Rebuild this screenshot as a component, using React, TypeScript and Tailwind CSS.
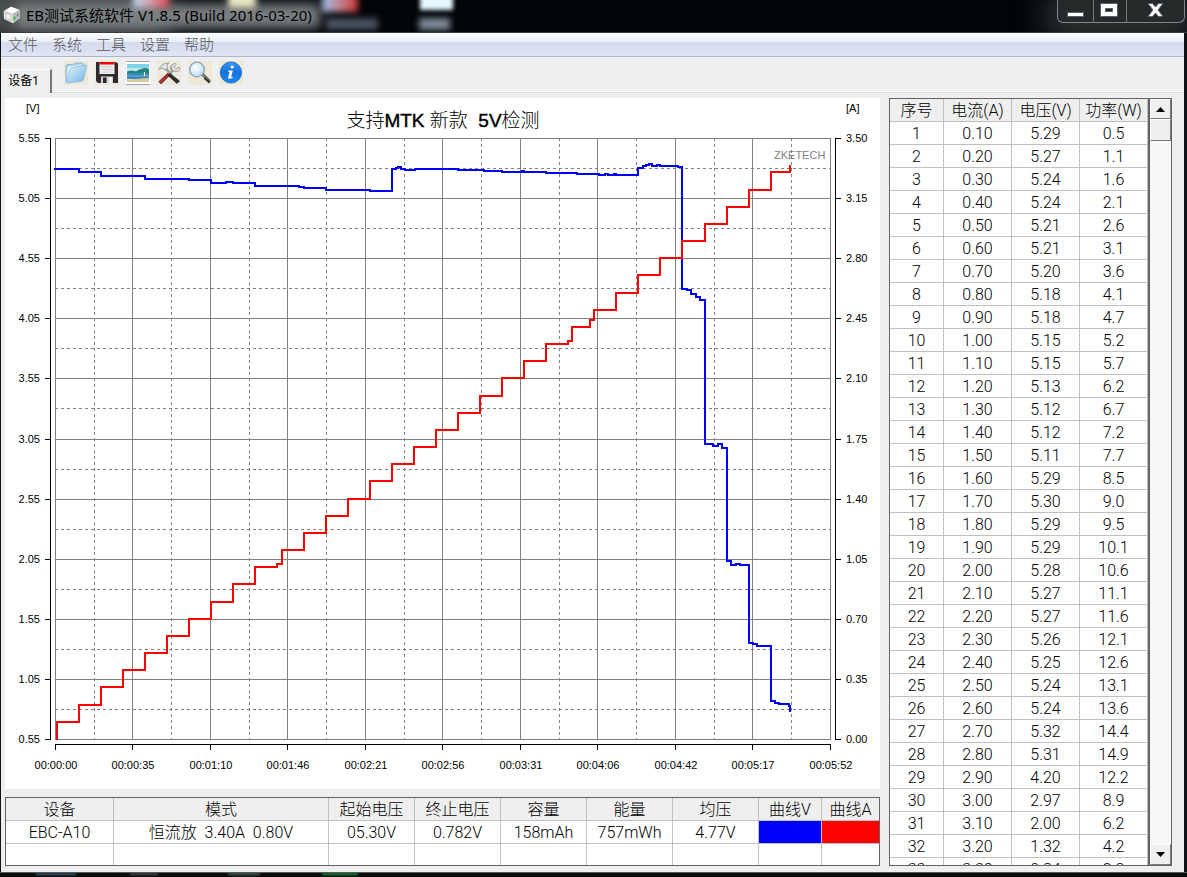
import React from "react";

const menus = ["文件", "系统", "工具", "设置", "帮助"];

const readings: [string, string, string][] = [
  ["0.10", "5.29", "0.5"], ["0.20", "5.27", "1.1"], ["0.30", "5.24", "1.6"], ["0.40", "5.24", "2.1"],
  ["0.50", "5.21", "2.6"], ["0.60", "5.21", "3.1"], ["0.70", "5.20", "3.6"], ["0.80", "5.18", "4.1"],
  ["0.90", "5.18", "4.7"], ["1.00", "5.15", "5.2"], ["1.10", "5.15", "5.7"], ["1.20", "5.13", "6.2"],
  ["1.30", "5.12", "6.7"], ["1.40", "5.12", "7.2"], ["1.50", "5.11", "7.7"], ["1.60", "5.29", "8.5"],
  ["1.70", "5.30", "9.0"], ["1.80", "5.29", "9.5"], ["1.90", "5.29", "10.1"], ["2.00", "5.28", "10.6"],
  ["2.10", "5.27", "11.1"], ["2.20", "5.27", "11.6"], ["2.30", "5.26", "12.1"], ["2.40", "5.25", "12.6"],
  ["2.50", "5.24", "13.1"], ["2.60", "5.24", "13.6"], ["2.70", "5.32", "14.4"], ["2.80", "5.31", "14.9"],
  ["2.90", "4.20", "12.2"], ["3.00", "2.97", "8.9"], ["3.10", "2.00", "6.2"], ["3.20", "1.32", "4.2"],
  ["3.30", "0.84", "2.8"],
];

const summaryColumns = [
  { title: "设备", width: "w-[108px]" },
  { title: "模式", width: "w-[215px]" },
  { title: "起始电压", width: "w-[86px]" },
  { title: "终止电压", width: "w-[86px]" },
  { title: "容量", width: "w-[86px]" },
  { title: "能量", width: "w-[86px]" },
  { title: "均压", width: "w-[86px]" },
  { title: "曲线V", width: "w-[63px]" },
  { title: "曲线A", width: "w-[57px]" },
];

/* Chart geometry */
const solidX = [55, 132, 210, 287, 365, 442, 520, 597, 675, 752, 830];
const dashedX = [94, 171, 249, 326, 404, 481, 559, 636, 714, 791];
const solidY = [138, 198, 258, 318, 378, 439, 499, 559, 619, 679, 739];
const dashedY = [168, 228, 288, 348, 408, 469, 529, 589, 649, 709];
const voltLabels = ["5.55", "5.05", "4.55", "4.05", "3.55", "3.05", "2.55", "2.05", "1.55", "1.05", "0.55"];
const ampLabels = ["3.50", "3.15", "2.80", "2.45", "2.10", "1.75", "1.40", "1.05", "0.70", "0.35", "0.00"];
const timeLabels = [
  "00:00:00", "00:00:35", "00:01:10", "00:01:46", "00:02:21", "00:02:56",
  "00:03:31", "00:04:06", "00:04:42", "00:05:17", "00:05:52",
];

const ampSteps: [number, number][] = [
  [57, 740], [57, 722], [79, 705], [101, 687], [123, 670], [145, 653], [167, 636], [189, 619], [211, 602],
  [233, 584], [255, 567], [277, 564], [282, 550], [304, 533], [326, 516], [348, 499], [370, 481], [392, 464],
  [414, 447], [436, 430], [458, 413], [480, 396], [502, 378], [524, 361], [546, 344], [568, 341], [572, 327],
  [590, 320], [594, 310], [616, 293], [638, 275], [660, 258], [682, 241], [705, 224], [727, 207], [749, 190],
  [771, 172], [790, 165],
];

const voltSteps: [number, number][] = [
  [54, 169], [79, 172], [101, 176], [145, 179], [189, 180], [211, 183], [226, 182], [233, 183], [255, 186],
  [299, 187], [304, 188], [326, 190], [370, 191], [392, 169], [396, 168], [398, 167], [401, 169], [405, 170],
  [415, 169], [458, 170], [484, 171], [502, 172], [522, 171], [524, 172], [546, 173], [577, 174], [599, 175],
  [605, 174], [608, 175], [614, 174], [616, 175], [638, 168], [643, 166], [646, 165], [649, 164], [652, 166],
  [657, 165], [660, 166], [678, 167], [682, 289], [687, 290], [691, 294], [696, 297], [700, 300], [705, 444],
  [713, 446], [718, 444], [722, 448], [727, 561], [731, 565], [736, 564], [740, 565], [749, 643], [753, 644],
  [757, 646], [771, 701], [775, 703], [779, 704], [789, 706], [790, 712],
];

function stepPath(points: [number, number][]) {
  return points.map(([x, y], i) => (i === 0 ? `M${x} ${y}` : `H${x}V${y}`)).join("");
}

function Chart() {
  return (
    <svg
      className="h-full w-full font-['Liberation_Sans','Noto_Sans_CJK_SC',sans-serif]"
      viewBox="5 98 875 691"
      role="img"
      aria-label="电压电流曲线"
    >
      <g stroke="#808080" fill="none" shapeRendering="crispEdges">
        {solidX.map((x) => <path key={x} d={`M${x + 0.5} 138V740`} />)}
        {solidY.map((y) => <path key={y} d={`M55 ${y + 0.5}H831`} />)}
        <g strokeDasharray="3 3">
          {dashedX.map((x) => <path key={x} d={`M${x + 0.5} 138V740`} />)}
          {dashedY.map((y) => <path key={y} d={`M55 ${y + 0.5}H831`} />)}
        </g>
      </g>
      <g stroke="#000" fill="none" shapeRendering="crispEdges">
        <path d="M50.5 138V740M835.5 138V740M55 744.5H831" />
        {solidY.map((y) => <path key={y} d={`M45 ${y + 0.5}H51M835 ${y + 0.5}H841`} />)}
        {solidX.map((x) => <path key={x} d={`M${x + 0.5} 744V750`} />)}
      </g>
      <g fontSize="11" fill="#000">
        <text x="26" y="112">[V]</text>
        <text x="846" y="112">[A]</text>
        {voltLabels.map((t, i) => <text key={t} x="40" y={solidY[i] + 4} textAnchor="end">{t}</text>)}
        {ampLabels.map((t, i) => <text key={t} x="846" y={solidY[i] + 4}>{t}</text>)}
        {timeLabels.map((t, i) => <text key={t} x={solidX[i] + 1} y="769" textAnchor="middle">{t}</text>)}
        <text x="774" y="159" fill="#808080">ZKETECH</text>
      </g>
      <text x="443" y="127" fontSize="19" textAnchor="middle" xmlSpace="preserve" fontWeight="300">
        支持<tspan stroke="#000" strokeWidth="0.4">MTK</tspan> 新款{"\u00a0 "}
        <tspan stroke="#000" strokeWidth="0.4">5V</tspan>检测
      </text>
      <path d={stepPath(voltSteps)} fill="none" stroke="#00f" strokeWidth="2" shapeRendering="crispEdges" />
      <path d={stepPath(ampSteps)} fill="none" stroke="#f00" strokeWidth="2" shapeRendering="crispEdges" />
    </svg>
  );
}

function AppIcon() {
  return (
    <svg className="size-5 shrink-0" viewBox="0 0 20 20" aria-hidden="true">
      <path d="M1 6 9 1l9 4v9l-8 5-8-5z" fill="#333" />
      <path d="M1.500 6 9 1.500 18 5l-7 4z" fill="#fff" />
      <path d="M1.500 6 11 9v9.500L2 14z" fill="#e2e4e2" />
      <path d="M11 9l7-4v8.500l-7 5z" fill="#b9bdbb" />
      <path d="M4 8.500 9 10v5.500L4 13.500z" fill="#f9faf9" stroke="#999" strokeWidth=".6" />
      <path d="M11.500 12l2-1v3l-2 1.500z" fill="#39b54a" />
      <path d="M15 9l1.500-1v3L15 12z" fill="#777" />
    </svg>
  );
}

function FolderIcon() {
  return (
    <svg className="size-6" viewBox="0 0 24 24" aria-hidden="true">
      <defs>
        <linearGradient id="folder" x1="0" y1="0" x2="1" y2="1">
          <stop offset="0" stopColor="#e9f7ff" />
          <stop offset="1" stopColor="#6eb4e6" />
        </linearGradient>
      </defs>
      <path d="M2 5q0-1.500 1.500-1.500H9L10.500 2H18q1.200 0 1.200 1.200V6L16 20 2 21z" fill="#a9d3ee" stroke="#82aecb" strokeWidth=".7" />
      <path d="M4 6 18 3.500 16 18 3 19z" fill="#fff" />
      <path d="M7.500 6.500 22 4q.8 0 .6 1L19.500 18.500q-.3 1.200-1.500 1.500L3.500 22q-1.200 0-1-1.200L6 8q.4-1.300 1.500-1.500z" fill="url(#folder)" stroke="#7eafd4" strokeWidth=".7" />
    </svg>
  );
}

function FloppyIcon() {
  return (
    <svg className="size-6" viewBox="0 0 24 24" aria-hidden="true">
      <path d="M1 1h20l2 1.500V22H3l-2-2z" fill="#2e2a2e" />
      <path d="M4.500 1h15v12h-15z" fill="#f1f1f1" />
      <path d="M4.500 1h15v2.500h-15z" fill="#f00" />
      <path d="M6 6h12M6 8.500h12M6 11h12" stroke="#c9c9c9" />
      <path d="M6 15.500h12V22H6z" fill="#d6d6d6" />
      <path d="M8 16.500h3.500V22H8z" fill="#252525" />
      <path d="M14 16h3v6h-3z" fill="#f6f6f6" />
    </svg>
  );
}

function PictureIcon() {
  return (
    <svg className="size-6" viewBox="0 0 24 24" aria-hidden="true">
      <path d="M0 0h24v24H0z" fill="#fff" />
      <path d="M0 .5h24M0 23.500h24" stroke="#a3a3a3" />
      <path d="M1 3h22v9H1z" fill="#7fd0e9" />
      <path d="M1 7h22v5H1z" fill="#bfe9ee" />
      <path d="M1 10.500q4-1.500 7-.5 3 .6 5-1.500 2-.7 3.500-1 3-1.300 6.500.5v5H1z" fill="#228477" />
      <path d="M1 12h22v6H1z" fill="#3987bd" />
      <path d="M1 15h22" stroke="#6db2d6" />
      <path d="M1 18.500 23 17v4H1z" fill="#dcca9d" />
      <path d="M18.500 11v4" stroke="#fff8ac" strokeWidth="1.200" />
    </svg>
  );
}

function ToolsIcon() {
  return (
    <svg className="size-6" viewBox="0 0 24 24" aria-hidden="true">
      <path d="M16 3.500q-4 5 .5 5.500L7 18" fill="none" stroke="#999" strokeWidth="2" />
      <path d="M15 9q-2-5 3-7l1 1.500-2 2.500 2 2 3-2 1 1q-1 5-6 3z" fill="#e4e4e4" stroke="#8a8a8a" strokeWidth=".7" />
      <path d="M2 20.500 11 12l2 2-8.500 8.500q-1.600.3-2.500-2z" fill="#a63336" stroke="#6e2023" strokeWidth=".8" />
      <path d="M8 7l7 7" stroke="#a2a2a2" strokeWidth="2.500" />
      <path d="M2 8Q5 2 12 2q-2 1-2 2.500l1 2-3 2.500-2-2q-2 0-3.500 1.500z" fill="#e8e8e8" stroke="#888" strokeWidth=".8" />
      <path d="M13 12.500 22.500 20l-2.500 2.500-9-8z" fill="#2d2d2d" stroke="#111" strokeWidth=".6" />
    </svg>
  );
}

function MagnifierIcon() {
  return (
    <svg className="size-6" viewBox="0 0 24 24" aria-hidden="true">
      <defs>
        <radialGradient id="lens" cx=".4" cy=".35" r=".75">
          <stop offset="0" stopColor="#fdfeff" />
          <stop offset="1" stopColor="#b4dcf5" />
        </radialGradient>
      </defs>
      <path d="M14 14.500l2-1.500 6 6q.8 1.800-1.200 2.700z" fill="#7b7b7b" stroke="#4a4a4a" strokeWidth=".7" />
      <path d="M17 17.500l4 3.500" stroke="#333" strokeWidth="2" strokeLinecap="round" />
      <circle cx="9" cy="8.500" r="7.300" fill="url(#lens)" stroke="#8d9db0" strokeWidth="1.300" />
    </svg>
  );
}

function InfoIcon() {
  return (
    <svg className="size-6" viewBox="0 0 24 24" aria-hidden="true">
      <defs>
        <linearGradient id="info" x1="0" y1="0" x2="0" y2="1">
          <stop offset="0" stopColor="#3d97f2" />
          <stop offset=".5" stopColor="#1672df" />
          <stop offset="1" stopColor="#1b8bf0" />
        </linearGradient>
      </defs>
      <circle cx="12" cy="11.500" r="10.600" fill="url(#info)" stroke="#1b5fb8" strokeWidth=".8" />
      <circle cx="13.200" cy="6" r="1.600" fill="#fff" />
      <path d="M9.500 9.500h4.300l-1.700 6.500 1.700-.3-.3 1.300q-2 1-3.600.8-1-.3-.7-1.500l1.300-5.300H9.200z" fill="#fff" />
    </svg>
  );
}

const tools = [
  { label: "打开", Icon: FolderIcon },
  { label: "保存", Icon: FloppyIcon },
  { label: "图片", Icon: PictureIcon },
  { label: "工具", Icon: ToolsIcon },
  { label: "查看", Icon: MagnifierIcon },
  { label: "关于", Icon: InfoIcon },
];

function TitleBar() {
  return (
    <header className="relative flex h-[33px] shrink-0 items-start justify-between overflow-hidden border-b border-[#3c3d3e] bg-[#020508]">
      <div className="absolute inset-0" aria-hidden="true">
        <div className="absolute -top-4 -left-6 h-14 w-48 bg-[#4a5152] blur-md" />
        <div className="absolute top-1 left-4 h-6 w-[304px] bg-[#7c8183] blur-[6px]" />
        <div className="absolute -top-2 left-[133px] h-4 w-9 bg-linear-to-r from-[#b7dcf2] to-[#d84a56] blur-[3px]" />
        <div className="absolute -top-2 left-[228px] h-4 w-7 bg-[#e9e6c4] blur-[3px]" />
        <div className="absolute -top-2 left-[322px] h-5 w-9 bg-linear-to-r from-[#9cbfea] to-[#cc2830] blur-[3px]" />
        <div className="absolute top-[18px] left-[326px] h-3 w-[52px] bg-[#46525d] blur-[3px]" />
        <div className="absolute -top-2 left-[420px] h-[18px] w-[33px] bg-[#e6f5ff] blur-[2px]" />
        <div className="absolute top-[18px] left-[419px] h-3 w-[31px] bg-[#7c8995] blur-[3px]" />
        <div className="absolute -top-2 -right-2 h-12 w-[150px] bg-[#303233] blur-lg" />
      </div>
      <div className="relative flex items-center gap-1 pt-[5px] pl-[2px]">
        <AppIcon />
        <h1 className="font-['Noto_Sans','Noto_Sans_CJK_SC',sans-serif] text-[15px] leading-5 whitespace-nowrap text-black">
          EB测试系统软件 V1.8.5 (Build 2016-03-20)
        </h1>
      </div>
      <div className="relative mr-[2px] flex h-[23px] rounded-b-md border border-t-0 border-[#808486] bg-[#26292a]">
        <button aria-label="最小化" className="flex w-9 items-center justify-center border-r border-[#77797b]">
          <svg className="h-4 w-5" viewBox="0 0 20 16" aria-hidden="true">
            <path d="M1.500 9.500h16v4h-16z" fill="#fff" stroke="#595d70" />
          </svg>
        </button>
        <button aria-label="最大化" className="flex w-[33px] items-center justify-center border-r border-[#77797b]">
          <svg className="h-4 w-5" viewBox="0 0 20 16" aria-hidden="true">
            <path d="M.5.5h17v13H.5zM5.500 5.500v3h7v-3z" fill="#fff" fillRule="evenodd" stroke="#595d70" />
          </svg>
        </button>
        <button aria-label="关闭" className="flex w-[57px] items-center justify-center">
          <svg className="h-4 w-5" viewBox="0 0 20 16" aria-hidden="true">
            <path d="M2 .5h4.500L9.500 4l3-3.500H17L12 7l5 6.500h-4.500l-3-3.500-3 3.500H2L7 7z" fill="#fff" stroke="#595d70" />
          </svg>
        </button>
      </div>
    </header>
  );
}

function SummaryTable() {
  const head = "h-[23px] border-r border-b border-[#c0c0c0] bg-[#efefef] px-0 pt-[2px] pb-0 text-center font-light whitespace-nowrap last:border-r-0";
  const cell = "h-[23px] border-r border-b border-[#c0c0c0] px-0 pt-[2px] pb-0 text-center whitespace-nowrap last:border-r-0";
  const values = ["EBC-A10", "恒流放\u00a0 3.40A\u00a0 0.80V", "05.30V", "0.782V", "158mAh", "757mWh", "4.77V"];
  return (
    <div className="h-[69px] shrink-0 overflow-hidden border border-[#646464] bg-white">
      <table className="w-full table-fixed border-separate border-spacing-0 text-base leading-5 font-light">
        <thead>
          <tr>
            {summaryColumns.map((c) => <th key={c.title} className={`${c.width} ${head}`}>{c.title}</th>)}
          </tr>
        </thead>
        <tbody>
          <tr>
            {values.map((v) => <td key={v} className={cell}>{v}</td>)}
            <td className={`${cell} bg-[#0000ff]`} />
            <td className={`${cell} bg-[#ff0000]`} />
          </tr>
          <tr>
            {summaryColumns.map((c) => <td key={c.title} className={cell} />)}
          </tr>
        </tbody>
      </table>
    </div>
  );
}

function ReadingsTable() {
  const head = "h-[23px] border-r border-b border-[#c0c0c0] bg-[#efefef] px-0 pt-[2px] pb-0 text-center font-light whitespace-nowrap";
  const cell = "h-[23px] border-r border-b border-[#c0c0c0] px-0 pt-[2px] pb-0 text-center";
  const bevel = "flex w-full shrink-0 items-center justify-center border border-t-white border-r-[#777] border-b-[#777] border-l-white bg-[#efefef]";
  return (
    <section className="flex w-[283px] shrink-0 overflow-hidden border border-[#646464] bg-white">
      <div className="min-w-0 flex-1 overflow-hidden">
        <table className="w-full table-fixed border-separate border-spacing-0 text-base leading-5 font-light">
          <thead>
            <tr>
              <th className={`w-[54px] ${head}`}>序号</th>
              <th className={`w-[68px] ${head}`}>电流(A)</th>
              <th className={`w-[68px] ${head}`}>电压(V)</th>
              <th className={`w-[68px] ${head}`}>功率(W)</th>
            </tr>
          </thead>
          <tbody>
            {readings.map(([amp, volt, watt], i) => (
              <tr key={amp}>
                <td className={cell}>{i + 1}</td>
                <td className={cell}>{amp}</td>
                <td className={cell}>{volt}</td>
                <td className={cell}>{watt}</td>
              </tr>
            ))}
          </tbody>
        </table>
      </div>
      <div className="flex w-[23px] shrink-0 flex-col border-l-2 border-[#646464] bg-[#f7f7f7]">
        <button aria-label="向上滚动" className={`h-5 ${bevel}`}>
          <svg className="h-[5px] w-[9px]" viewBox="0 0 9 5" aria-hidden="true"><path d="M0 5 4.500 0 9 5z" /></svg>
        </button>
        <div className={`h-[22px] ${bevel}`} />
        <div className="flex-1" />
        <button aria-label="向下滚动" className={`h-[21px] ${bevel}`}>
          <svg className="h-[5px] w-[9px]" viewBox="0 0 9 5" aria-hidden="true"><path d="M0 0h9L4.500 5z" /></svg>
        </button>
      </div>
    </section>
  );
}

export default function App() {
  return (
    <div className="flex h-screen flex-col overflow-hidden bg-[#101315] font-['Roboto','Noto_Sans_CJK_SC',sans-serif] text-black">
      <TitleBar />
      <div className="mr-[3px] ml-px flex min-h-0 flex-1 flex-col bg-[#efefef]">
        <nav className="flex h-6 shrink-0 items-center gap-[14px] border-b border-[#b0b6ca] bg-[linear-gradient(to_bottom,#ffffff_0px,#e8edf6_9px,#d4daed_9px,#e1e6f6_23px)] pl-[7px]">
          {menus.map((m) => (
            <button key={m} className="pt-px text-[15px] leading-5 font-light text-[#555]">{m}</button>
          ))}
        </nav>
        <div className="flex h-9 shrink-0 items-stretch">
          <div className="flex items-end">
            <button className="h-6 w-[51px] border-t border-r-2 border-t-white border-r-[#777] pr-1 pb-[2px] text-xs leading-5 whitespace-nowrap">
              设备1
            </button>
          </div>
          <div className="flex flex-1 items-start gap-[7px] border-b border-[#dedede] pt-1 pl-3 shadow-[inset_0_-1px_0_#fff]">
            {tools.map(({ label, Icon }) => (
              <button key={label} aria-label={label} className="size-6 bg-[#ece9d8]"><Icon /></button>
            ))}
          </div>
        </div>
        <main className="flex min-h-0 flex-1 gap-[9px] pt-[5px] pr-3 pb-[6px] pl-1">
          <div className="flex min-w-0 flex-1 flex-col gap-2">
            <section className="min-h-0 flex-1 bg-white"><Chart /></section>
            <SummaryTable />
          </div>
          <ReadingsTable />
        </main>
      </div>
      <footer className="relative h-[5px] shrink-0 overflow-hidden border-t border-[#555b5b] bg-[#0a0c0d]" aria-hidden="true">
        <div className="absolute top-0 left-9 h-[2px] w-10 bg-[#3e5f78] blur-[1px]" />
        <div className="absolute top-0 left-[130px] h-[2px] w-7 bg-[#4c5763] blur-[1px]" />
        <div className="absolute top-0 left-[228px] h-[2px] w-8 bg-[#4c6d5d] blur-[1px]" />
        <div className="absolute top-0 left-[322px] h-[2px] w-9 bg-[#1a9a35] blur-[1px]" />
      </footer>
    </div>
  );
}
